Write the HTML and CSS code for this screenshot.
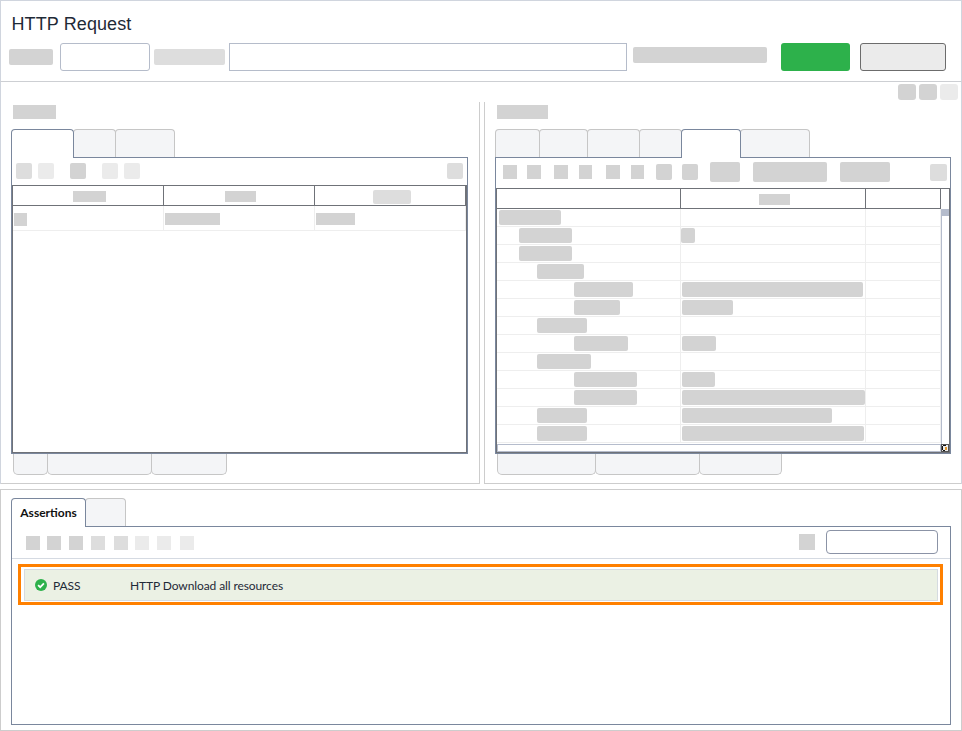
FILE: index.html
```html
<!DOCTYPE html>
<html lang="en">
<head>
<meta charset="utf-8">
<title>HTTP Request</title>
<link rel="stylesheet" href="styles.css">
</head>
<body>
<div class="app">
  <header class="top">
    <h1 class="title">HTTP Request</h1>
    <div class="reqbar">
      <span class="ph lbl c1" style="width:44px"></span>
      <span class="field method"></span>
      <span class="ph lbl c2" style="width:71px"></span>
      <span class="field url"></span>
      <span class="ph lbl lbl-up c1" style="width:134px"></span>
      <button class="btn go" type="button"></button>
      <button class="btn stop" type="button"></button>
    </div>
  </header>

  <main class="work">
    <div class="actions">
      <span class="ph act c1"></span><span class="ph act c1"></span><span class="ph act c3"></span>
    </div>
    <div class="panes">
      <section class="pane pane-l">
        <div class="ph caption c1" style="width:43px"></div>
        <div class="tabs">
          <span class="tab active" style="width:63px"></span>
          <span class="tab" style="width:43px"></span>
          <span class="tab" style="width:60px"></span>
        </div>
        <div class="box">
          <div class="tools tools-l">
            <span class="ph i16 c2"></span>
            <span class="ph i16 c3 ml6"></span>
            <span class="ph i16 c1 ml16"></span>
            <span class="ph i16 c3 ml16"></span>
            <span class="ph i16 c3 ml6"></span>
            <span class="ph i16 c2 push"></span>
          </div>
          <div class="tbl tbl-l">
            <div class="tr-h">
              <div class="th"><span class="ph hb c1" style="width:33px"></span></div>
              <div class="th"><span class="ph hb c1" style="width:31px"></span></div>
              <div class="th"><span class="ph hb hb-lg c2" style="width:38px"></span></div>
            </div>
            <div class="tr-b">
              <div class="td"><span class="ph cb13 c1" style="width:13px"></span></div>
              <div class="td"><span class="ph cb12 c1" style="width:55px"></span></div>
              <div class="td"><span class="ph cb12 c1" style="width:39px"></span></div>
            </div>
          </div>
        </div>
        <div class="btabs">
          <span class="btab" style="width:35px"></span>
          <span class="btab" style="width:105px"></span>
          <span class="btab" style="width:76px"></span>
        </div>
      </section>

      <section class="pane pane-r">
        <div class="ph caption c1" style="width:51px"></div>
        <div class="tabs">
          <span class="tab" style="width:45px"></span>
          <span class="tab" style="width:49px"></span>
          <span class="tab" style="width:53px"></span>
          <span class="tab" style="width:43px"></span>
          <span class="tab active" style="width:60px"></span>
          <span class="tab" style="width:70px"></span>
        </div>
        <div class="box box-r">
          <div class="tools tools-r">
            <span class="ph i14 c1" style="width:14px"></span>
            <span class="ph i14 c1 ml10" style="width:14px"></span>
            <span class="ph i14 c1 ml13" style="width:14px"></span>
            <span class="ph i14 c1 ml11" style="width:13px"></span>
            <span class="ph i14 c1 ml14" style="width:14px"></span>
            <span class="ph i14 c1 ml11" style="width:13px"></span>
            <span class="ph i16 c1 ml12"></span>
            <span class="ph i16 c1 ml10"></span>
            <span class="ph i20 c1 ml12" style="width:30px"></span>
            <span class="ph i20 c1 ml13" style="width:74px"></span>
            <span class="ph i20 c1 ml13" style="width:50px"></span>
            <span class="ph i17 c2 push"></span>
          </div>
          <div class="tree">
            <div class="tree-h">
              <div class="tc"></div>
              <div class="tc"><span class="ph hb c1" style="width:31px"></span></div>
              <div class="tc"></div>
            </div>
            <div class="tree-main">
              <div class="rows">
                <div class="row"><div class="k l0"><span class="ph rb" style="width:62px"></span></div><div class="v"></div><div class="x"></div></div>
                <div class="row"><div class="k l1"><span class="ph rb" style="width:53px"></span></div><div class="v v0"><span class="ph rb" style="width:14px"></span></div><div class="x"></div></div>
                <div class="row"><div class="k l1"><span class="ph rb" style="width:53px"></span></div><div class="v"></div><div class="x"></div></div>
                <div class="row"><div class="k l2"><span class="ph rb" style="width:47px"></span></div><div class="v"></div><div class="x"></div></div>
                <div class="row"><div class="k l3"><span class="ph rb" style="width:59px"></span></div><div class="v"><span class="ph rb" style="width:181px"></span></div><div class="x"></div></div>
                <div class="row"><div class="k l3"><span class="ph rb" style="width:46px"></span></div><div class="v"><span class="ph rb" style="width:51px"></span></div><div class="x"></div></div>
                <div class="row"><div class="k l2"><span class="ph rb" style="width:50px"></span></div><div class="v"></div><div class="x"></div></div>
                <div class="row"><div class="k l3"><span class="ph rb" style="width:54px"></span></div><div class="v"><span class="ph rb" style="width:34px"></span></div><div class="x"></div></div>
                <div class="row"><div class="k l2"><span class="ph rb" style="width:54px"></span></div><div class="v"></div><div class="x"></div></div>
                <div class="row"><div class="k l3"><span class="ph rb" style="width:63px"></span></div><div class="v"><span class="ph rb" style="width:33px"></span></div><div class="x"></div></div>
                <div class="row"><div class="k l3"><span class="ph rb" style="width:63px"></span></div><div class="v"><span class="ph rb" style="width:183px"></span></div><div class="x"></div></div>
                <div class="row"><div class="k l2"><span class="ph rb" style="width:50px"></span></div><div class="v"><span class="ph rb" style="width:150px"></span></div><div class="x"></div></div>
                <div class="row"><div class="k l2"><span class="ph rb" style="width:50px"></span></div><div class="v"><span class="ph rb" style="width:182px"></span></div><div class="x"></div></div>
              </div>
              <div class="vscroll"><div class="thumb"></div></div>
            </div>
            <div class="tree-foot">
              <div class="hscroll"></div>
              <svg class="corner" width="8" height="8" viewBox="0 0 8 8" aria-hidden="true">
                <rect width="8" height="8" fill="#555"/>
                <rect x="1" y="1" width="6" height="6" fill="#eee"/>
                <path d="M2 1.5 H5 M1.5 2 V6 M2 6.5 H4" stroke="#111" stroke-width="1" fill="none"/>
                <rect x="4" y="3" width="2" height="3" fill="#e59a2e"/>
              </svg>
            </div>
          </div>
        </div>
        <div class="btabs">
          <span class="btab" style="width:99px"></span>
          <span class="btab" style="width:105px"></span>
          <span class="btab" style="width:83px"></span>
        </div>
      </section>
    </div>
  </main>

  <section class="results">
    <div class="tabs tabs-res">
      <span class="tab active tab-text" style="width:75px">Assertions</span>
      <span class="tab" style="width:41px"></span>
    </div>
    <div class="box box-res">
      <div class="tools-res">
        <span class="ph s14 c1"></span>
        <span class="ph s14 c1 ml7"></span>
        <span class="ph s14 c1 ml8"></span>
        <span class="ph s14 c2 ml8"></span>
        <span class="ph s14 c2 ml9"></span>
        <span class="ph s14 c3 ml7"></span>
        <span class="ph s14 c3 ml8"></span>
        <span class="ph s14 c3 ml9"></span>
        <span class="ph i16 c1 push res-filter-btn"></span>
        <span class="field res-filter"></span>
      </div>
      <div class="highlight">
        <div class="assert">
          <svg class="ok" width="12" height="12" viewBox="0 0 12 12" aria-hidden="true">
            <circle cx="6" cy="6" r="6" fill="#2db14b"/>
            <path d="M3.1 6.1 L5.2 8.2 L8.9 4.3" fill="none" stroke="#fff" stroke-width="1.7"/>
          </svg>
          <span class="status">PASS</span>
          <span class="name">HTTP Download all resources</span>
        </div>
      </div>
    </div>
  </section>
</div>
</body>
</html>
```

FILE: styles.css
```css
* { box-sizing: border-box; }
html, body { margin: 0; padding: 0; background: #fff; }
.app { width: 962px; height: 731px; display: flex; flex-direction: column; font-family: Lato, "Open Sans", sans-serif; color: #1f2a37; }

.ph { display: block; flex: none; background: #d3d3d3; border-radius: 2px; }
.c1 { background: #d3d3d3; }
.c2 { background: #dddddd; }
.c3 { background: #ebebeb; }
.push { margin-left: auto; }
.ml6 { margin-left: 6px; }
.ml7 { margin-left: 7px; }
.ml8 { margin-left: 8px; }
.ml9 { margin-left: 9px; }
.ml10 { margin-left: 10px; }
.ml11 { margin-left: 11px; }
.ml12 { margin-left: 12px; }
.ml13 { margin-left: 13px; }
.ml14 { margin-left: 14px; }
.ml16 { margin-left: 16px; }
.i14 { height: 14px; border-radius: 0; }
.i16 { width: 16px; height: 16px; }
.i17 { width: 17px; height: 17px; }
.i20 { height: 20px; }
.s14 { width: 14px; height: 14px; border-radius: 0; }

/* top */
.top { height: 82px; flex: none; border: 1px solid #d0d5de; border-bottom-color: #cdcfd3; padding: 0 14px 10px 8px; }
.title { margin: 0 0 0 2.5px; height: 42px; padding-top: 13px; font: 400 18px/20px "Liberation Sans", sans-serif; letter-spacing: 0.1px; color: #1f2a37; }
.reqbar { height: 28px; display: flex; align-items: center; }
.lbl { height: 16px; }
.lbl-up { margin: 4px 14px 0 6px; align-self: flex-start; }
.field { display: block; flex: none; background: #fff; border: 1px solid #b5bcca; }
.method { width: 90px; height: 28px; margin: 0 4px 0 7px; border-radius: 3px; }
.url { width: 398px; height: 28px; margin-left: 4px; }
.btn { display: block; padding: 0; height: 28px; border-radius: 3px; flex: none; }
.go { width: 69px; background: #2db14b; border: 0; }
.stop { width: 86px; margin-left: 10px; background: #ebebeb; border: 1px solid #6c6c6c; }

/* middle */
.work { height: 402px; flex: none; border-left: 1px solid #d0d5de; border-right: 1px solid #d0d5de; }
.actions { height: 20px; padding: 2px 3px 0 0; display: flex; justify-content: flex-end; gap: 3px; }
.act { width: 18px; height: 16px; border-radius: 3px; }
.panes { height: 382px; display: flex; gap: 4px; }
.pane { height: 382px; border-bottom: 1px solid #cdcdcd; padding-top: 3px; }
.pane-l { width: 479px; border-right: 1px solid #cdcdcd; }
.pane-r { width: 477px; border-left: 1px solid #cdcdcd; }
.caption { height: 14px; margin-left: 12px; border-radius: 0; }

.tabs { display: flex; height: 29px; margin: 10px 0 -1px 10px; position: relative; z-index: 1; }
.tab { display: block; flex: none; height: 28px; margin-right: -1px; background: #f4f5f7; border: 1px solid #c6c6c6; border-bottom: 0; border-radius: 4px 4px 0 0; }
.tab.active { height: 29px; background: #fff; border-color: #7a879d; position: relative; z-index: 1; }
.tab-text { font-size: 12px; font-weight: 700; line-height: 27px; text-align: center; color: #111; }

.box { width: 457px; height: 297px; margin-left: 10px; border: 1px solid #7a879d; }
.box-r { width: 456px; }
.tools { display: flex; align-items: flex-start; }
.tools-l { height: 27px; padding: 5px 4px 0 4px; }
.tools-r { height: 30px; align-items: center; padding: 0 3px 2px 7px; }

.tbl { height: 268px; border: 1px solid #6f7278; }
.tr-h { display: flex; height: 20px; border-bottom: 1px solid #6f7278; }
.th { width: 151px; border-right: 1px solid #6f7278; display: flex; align-items: center; justify-content: center; padding: 1px 0 0 3px; }
.hb { height: 11px; border-radius: 0; }
.hb-lg { height: 14px; border-radius: 2px; margin-top: 1px; }
.tr-b { display: flex; height: 25px; border-bottom: 1px solid #eeeeee; }
.td { width: 151px; border-right: 1px solid #eeeeee; padding: 7px 0 0 1px; }
.cb13 { height: 13px; border-radius: 0; }
.cb12 { height: 12px; border-radius: 0; }

.tree { width: 454px; height: 265px; border: 1px solid #6f7278; }
.tree-h { display: flex; height: 20px; border-bottom: 1px solid #6f7278; width: 444px; }
.tc { display: flex; align-items: center; justify-content: center; padding: 1px 0 0 3px; border-right: 1px solid #6f7278; }
.tc:nth-child(1) { width: 184px; }
.tc:nth-child(2) { width: 185px; }
.tc:nth-child(3) { width: 75px; }
.tree-main { display: flex; height: 235px; }
.rows { width: 444px; flex: none; }
.row { display: flex; height: 18px; border-bottom: 1px solid #eeeeee; }
.k, .v, .x { height: 17px; padding-top: 1px; border-right: 1px solid #eeeeee; }
.k { width: 184px; }
.v { width: 185px; padding-left: 1px; }
.v0 { padding-left: 0; }
.x { width: 75px; }
.l0 { padding-left: 2px; }
.l1 { padding-left: 22px; }
.l2 { padding-left: 40px; }
.l3 { padding-left: 77px; }
.rb { height: 15px; border-radius: 2px; }
.vscroll { flex: 1; border-left: 1px solid #b5bccc; }
.thumb { height: 7px; background: #b5bccc; }
.tree-foot { display: flex; height: 8px; }
.hscroll { width: 444px; height: 8px; background: #fff; border: 1px solid #b5bccc; }
.corner { display: block; flex: none; }

.btabs { display: flex; margin-left: 12px; }
.btab { display: block; flex: none; height: 21px; margin-right: -1px; background: #f4f5f7; border: 1px solid #c6c6c6; border-top: 0; border-radius: 0 0 5px 5px; }

/* results */
.results { margin-top: 5px; height: 242px; flex: none; border: 1px solid #cdcdcd; padding-top: 8px; }
.tabs-res { margin-top: 0; }
.box-res { width: 940px; height: 199px; }
.tools-res { height: 32px; display: flex; align-items: flex-start; padding: 9px 12px 0 14px; border-bottom: 1px solid #d5dae2; }
.res-filter-btn { margin-top: -2px; border-radius: 0; }
.res-filter { width: 112px; height: 24px; margin: -6px 0 0 11px; border-color: #8b93a6; border-radius: 4px; }
.highlight { width: 925px; height: 41px; margin: 5px 0 0 6px; border: 3px solid #ff8000; padding: 2px 2px 1px 3px; }
.assert { height: 32px; background: #ebf1e4; border: 1px solid #d5dbe0; display: flex; align-items: center; padding-left: 10px; font-size: 12px; letter-spacing: -0.1px; color: #1f2a37; }
.ok { display: block; flex: none; }
.status { width: 77px; margin-left: 6px; }
```
